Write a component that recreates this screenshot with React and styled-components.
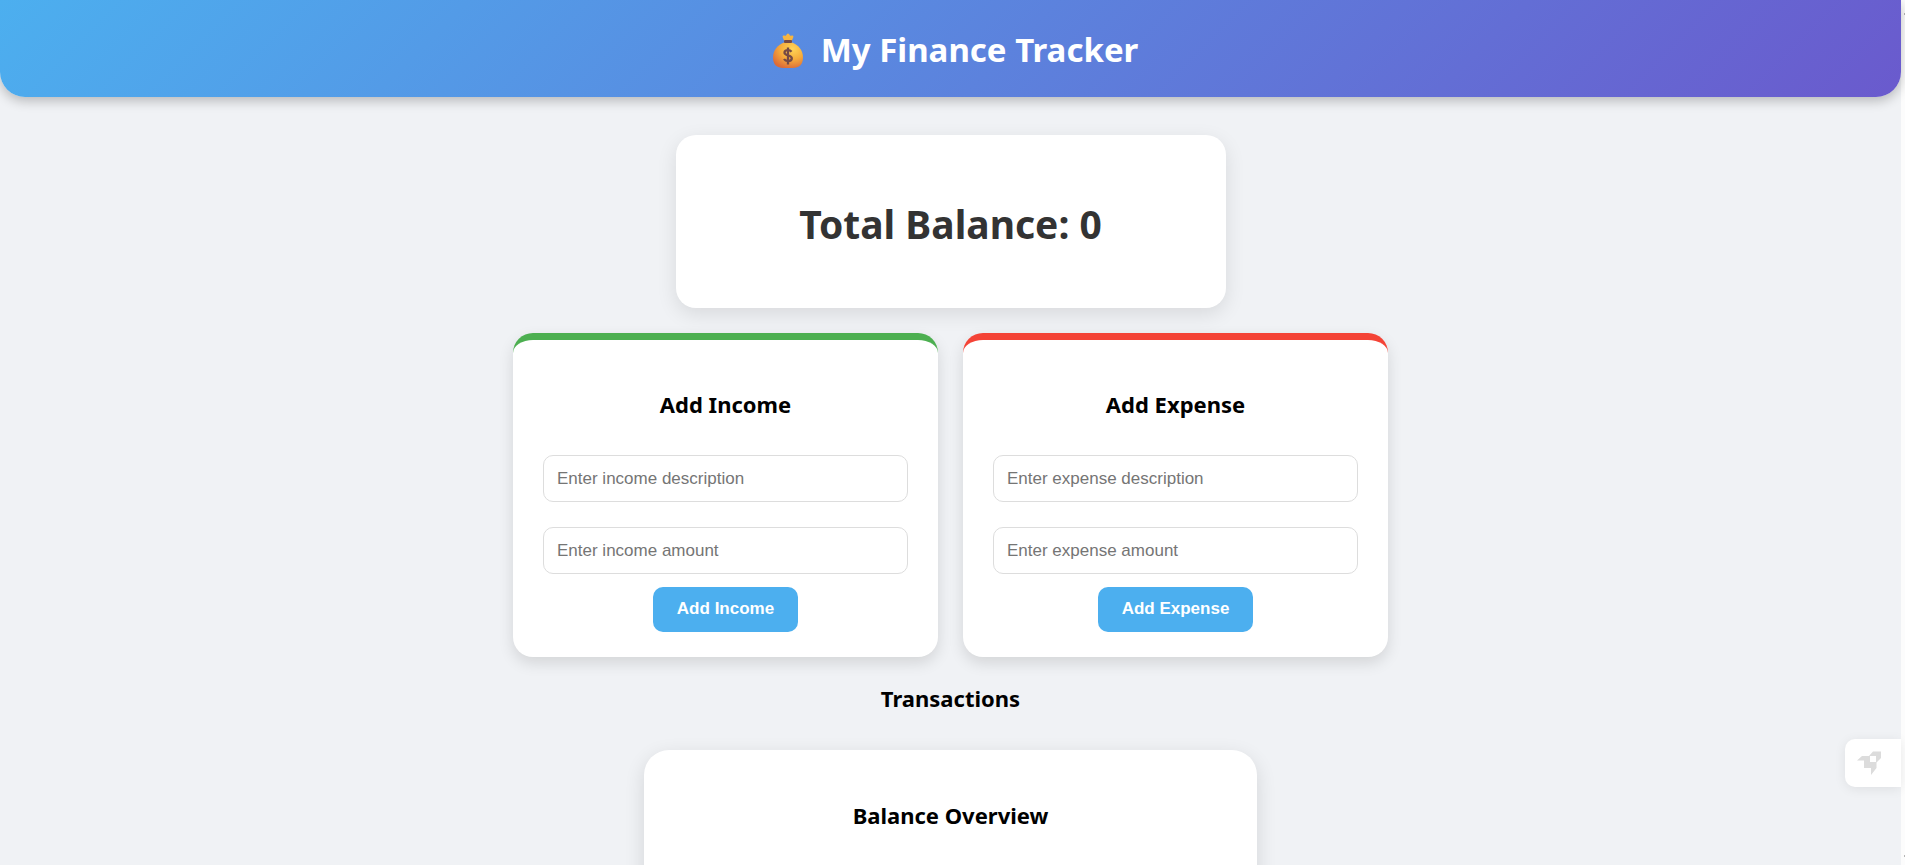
import React, { useId, useState } from "react";
import styled, { createGlobalStyle } from "styled-components";

const GlobalStyle = createGlobalStyle`
  *, *::before, *::after { box-sizing: border-box; }
  body {
    margin: 0;
    background: #f0f2f5;
    color: #000;
    font-family: "Segoe UI", "Noto Sans", sans-serif;
  }
`;

const Shell = styled.div`
  display: flex;
  height: 100vh;
  overflow: hidden;
`;

const Page = styled.div`
  position: relative;
  flex: 1;
  min-width: 0;
`;

const ScrollTrack = styled.div`
  display: flex;
  flex-direction: column;
  justify-content: space-between;
  align-items: flex-end;
  width: 4px;
  flex: none;
  padding: 13px 0 8px;
  background: #fcfcfc;
  &::before, &::after {
    content: "";
    width: 1px;
    height: 2px;
    background: #b5b5b5;
  }
`;

const Header = styled.header`
  display: flex;
  justify-content: center;
  align-items: center;
  gap: 18px;
  height: 97px;
  padding: 4px 0 0 10px;
  border-radius: 0 0 25px 25px;
  background: linear-gradient(135deg, #4cafef, #6a5acd);
  box-shadow: 0 4px 12px rgba(0, 0, 0, 0.24);
  color: #fff;
`;

const Title = styled.h1`
  margin: 0;
  padding-bottom: 2px;
  font-size: 33px;
  line-height: 48px;
  font-weight: 700;
`;

const Content = styled.main`
  display: flex;
  flex-direction: column;
  align-items: center;
  padding: 38px 20px 25px;
`;

const BalanceCard = styled.section`
  display: flex;
  justify-content: center;
  align-items: center;
  width: 100%;
  max-width: 550px;
  padding: 61px 30px 56px;
  border-radius: 20px;
  background: #fff;
  box-shadow: 0 6px 20px rgba(0, 0, 0, 0.1);
`;

const Balance = styled.h2`
  margin: 0;
  color: #333;
  font-size: 39px;
  line-height: 56px;
  font-weight: 700;
`;

const Forms = styled.div`
  display: flex;
  flex-wrap: wrap;
  justify-content: center;
  gap: 25px;
  width: 100%;
  margin-top: 25px;
`;

const FormCard = styled.form`
  display: flex;
  flex-direction: column;
  align-items: center;
  width: 425px;
  max-width: 100%;
  padding: 49px 30px 25px;
  border-top: 7px solid ${(p) => p.$accent};
  border-radius: 20px;
  background: #fff;
  box-shadow: 0 6px 15px rgba(0, 0, 0, 0.12);
`;

const Heading = styled.h3`
  margin: 0;
  font-size: 22px;
  line-height: 30px;
  font-weight: 700;
`;

const Fields = styled.div`
  display: flex;
  flex-direction: column;
  gap: 25px;
  width: 100%;
  margin: 36px 0 13px;
`;

const Field = styled.input`
  width: 100%;
  height: 47px;
  padding: 0 13px;
  border: 1px solid #ddd;
  border-radius: 10px;
  background: #fff;
  font: 17px "Liberation Sans", Arial, sans-serif;
  &::placeholder { color: #757575; }
`;

const SubmitButton = styled.button`
  height: 45px;
  padding: 0 24px 2px;
  border: 0;
  border-radius: 10px;
  background: #4cafef;
  color: #fff;
  font: 700 17px "Liberation Sans", Arial, sans-serif;
  cursor: pointer;
`;

const Transactions = styled.section`
  padding: 26px 0 37px;
`;

const Overview = styled.section`
  display: flex;
  justify-content: center;
  width: 100%;
  max-width: 613px;
  min-height: 420px;
  padding: 50px 30px 30px;
  border-radius: 25px;
  background: #fff;
  box-shadow: 0 6px 20px rgba(0, 0, 0, 0.12);
`;

const Launcher = styled.button`
  position: absolute;
  top: 739px;
  right: 0;
  display: flex;
  align-items: center;
  width: 56px;
  height: 48px;
  padding: 0 0 0 12px;
  border: 0;
  border-radius: 10px 0 0 10px;
  background: #fff;
  box-shadow: 0 2px 12px rgba(0, 0, 0, 0.08);
  cursor: pointer;
`;

function MoneyBag() {
  return (
    <svg width="30" height="36" viewBox="0 0 30 36" aria-hidden="true">
      <defs>
        <radialGradient id="bag" cx="0.65" cy="0.25" r="0.8">
          <stop offset="0" stopColor="#ffd557" />
          <stop offset="0.5" stopColor="#f6ad3c" />
          <stop offset="1" stopColor="#dc6b38" />
        </radialGradient>
      </defs>
      <path d="M11.500 8.500 9.800 4.500Q9 2.200 10.800 2.500L12.800 2.800 14 1Q15 0 16 1L17.200 2.800 19.200 2.500Q21 2.200 20.200 4.500L18.500 8.500Z" fill="#f7b540" />
      <path d="M11 9.500C5 11.500 0 17 0 24.500 0 31.500 4 35 10 35H20C26 35 30 31.500 30 24.500 30 17 25 11.500 19 9.500Z" fill="url(#bag)" />
      <rect x="11" y="7" width="8" height="3" rx="1" fill="#754a45" />
      <path d="M18.500 18.800C17.500 17.500 16.500 17.200 15 17.200 12.800 17.200 11.500 18.200 11.500 19.800 11.500 23 18.800 21.600 18.800 25.200 18.800 27 17.200 28 15 28 13 28 11.800 27.300 11 26M15 14.500V31.500" fill="none" stroke="#754a45" strokeWidth="2.300" />
    </svg>
  );
}

function Rocket() {
  return (
    <svg width="24" height="24" viewBox="0 0 24 24" aria-hidden="true">
      <path fill="#dcdcdc" fillRule="evenodd" d="M0 9.500 5 5H12L16 .5H24V7L19.500 11.500V17L14 24V17H7V9.500ZM13 5V11H19V5Z" />
    </svg>
  );
}

function EntryForm({ kind, accent, onAdd }) {
  const id = useId();
  const [text, setText] = useState("");
  const [amount, setAmount] = useState("");
  const name = kind.toLowerCase();
  const submit = (e) => {
    e.preventDefault();
    if (!text || !Number(amount)) return;
    onAdd(Number(amount));
    setText("");
    setAmount("");
  };
  return (
    <FormCard $accent={accent} onSubmit={submit} aria-labelledby={id}>
      <Heading id={id}>Add {kind}</Heading>
      <Fields>
        <Field
          type="text"
          aria-label={`${kind} description`}
          placeholder={`Enter ${name} description`}
          value={text}
          onChange={(e) => setText(e.target.value)}
        />
        <Field
          type="number"
          aria-label={`${kind} amount`}
          placeholder={`Enter ${name} amount`}
          value={amount}
          onChange={(e) => setAmount(e.target.value)}
        />
      </Fields>
      <SubmitButton type="submit">Add {kind}</SubmitButton>
    </FormCard>
  );
}

export default function App() {
  const [balance, setBalance] = useState(0);
  return (
    <Shell>
      <GlobalStyle />
      <Page>
        <Header>
          <MoneyBag />
          <Title>My Finance Tracker</Title>
        </Header>
        <Content>
          <BalanceCard>
            <Balance>Total Balance: {balance}</Balance>
          </BalanceCard>
          <Forms>
            <EntryForm kind="Income" accent="#4caf50" onAdd={(n) => setBalance((b) => b + n)} />
            <EntryForm kind="Expense" accent="#f44336" onAdd={(n) => setBalance((b) => b - n)} />
          </Forms>
          <Transactions>
            <Heading>Transactions</Heading>
          </Transactions>
          <Overview>
            <Heading>Balance Overview</Heading>
          </Overview>
        </Content>
        <Launcher type="button" aria-label="Launch">
          <Rocket />
        </Launcher>
      </Page>
      <ScrollTrack />
    </Shell>
  );
}
